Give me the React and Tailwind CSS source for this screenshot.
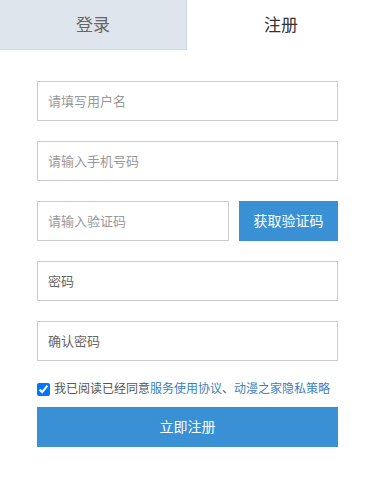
import React, { useState } from 'react';

const font = { fontFamily: '"Liberation Sans", "Noto Sans CJK SC", sans-serif' };

export default function App() {
  const [agree, setAgree] = useState(true);

  return (
    <div className="w-[375px] h-[484px] bg-white" style={font}>
      {/* tabs */}
      <div className="flex h-[50px]">
        <div className="w-[187px] flex items-center justify-center bg-[#dfe5ec] border-r border-b border-[#d4d8dc] text-[17px] text-[#666] pt-[2px]">
          登录
        </div>
        <div className="flex-1 flex items-center justify-center text-[17px] text-[#333] pt-[2px]">
          注册
        </div>
      </div>

      {/* form */}
      <div className="px-[37px] pt-[31px] flex flex-col gap-[20px]">
        <input
          className="h-[40px] border border-[#ccc] px-[10px] text-[13px] outline-none placeholder:text-[#999]"
          placeholder="请填写用户名"
        />
        <input
          className="h-[40px] border border-[#ccc] px-[10px] text-[13px] outline-none placeholder:text-[#999]"
          placeholder="请输入手机号码"
        />
        <div className="flex gap-[10px]">
          <input
            className="w-[192px] h-[40px] border border-[#ccc] px-[10px] text-[13px] outline-none placeholder:text-[#999]"
            placeholder="请输入验证码"
          />
          <button className="flex-1 h-[40px] bg-[#3a90d4] text-white text-[14px]">
            获取验证码
          </button>
        </div>
        <input
          type="password"
          className="h-[40px] border border-[#ccc] px-[10px] text-[13px] outline-none placeholder:text-[#666]"
          placeholder="密码"
        />
        <input
          type="password"
          className="h-[40px] border border-[#ccc] px-[10px] text-[13px] outline-none placeholder:text-[#666]"
          placeholder="确认密码"
        />
      </div>

      <label className="mx-[37px] mt-[19px] flex items-center gap-[4px] text-[12px] text-[#555]">
        <input
          type="checkbox"
          checked={agree}
          onChange={e => setAgree(e.target.checked)}
          className="w-[13px] h-[13px] m-0"
        />
        <span>
          我已阅读已经同意<span className="text-[#3a7fc0]">服务使用协议</span>、<span className="text-[#3a7fc0]">动漫之家隐私策略</span>
        </span>
      </label>

      <div className="px-[37px] mt-[9px]">
        <button className="w-full h-[40px] bg-[#3a90d4] text-white text-[14px]">
          立即注册
        </button>
      </div>
    </div>
  );
}
